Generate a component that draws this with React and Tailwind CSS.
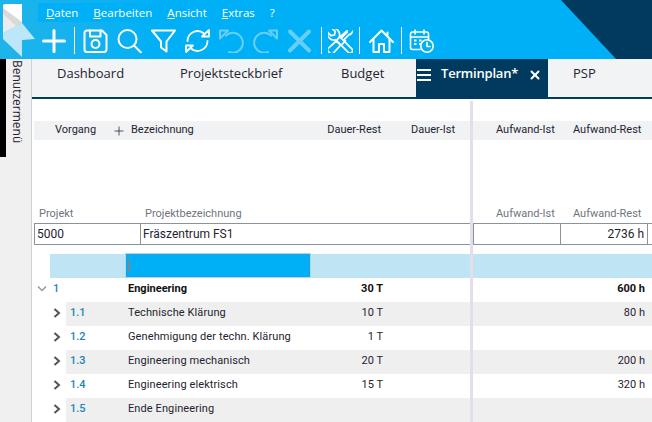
import { Plus, X } from 'lucide-react'

const sans = "font-['Open_Sans',sans-serif]"
const roboto = "font-['Roboto',sans-serif]"

function Ico({ children, className = '', stroke = 2 }) {
  return (
    <svg viewBox="0 0 25 24" width="25" height="24" fill="none" stroke="white" strokeWidth={stroke} strokeLinecap="round" strokeLinejoin="round" className={className}>
      {children}
    </svg>
  )
}

function Sep({ className = '' }) {
  return <div className={`w-px h-[27px] bg-white ${className}`} />
}

function Menu({ first, rest, className }) {
  return (
    <span className={className}>
      <span className="underline">{first}</span>{rest}
    </span>
  )
}

function Logo() {
  return (
    <svg viewBox="0 0 38 59" width="38" height="59" className="shrink-0">
      <polygon points="3,5 5,4 22,4 22,23 3,33" fill="white" />
      <polygon points="3,14 16,26 3,33" fill="#ececec" />
      <polygon points="3,8 22,22 22,23 16,26 3,14" fill="#d9d9d9" />
      <polygon points="3,33 22,23 35,39 22,40 22,57 3,39" fill="#bde6f8" />
    </svg>
  )
}

function Toolbar() {
  return (
    <div className="flex items-center h-[35px] pb-[2px] gap-[9px]">
      <Plus color="white" size={36} strokeWidth={2} className="-ml-[2px] -mr-[7px]" />
      <Sep className="-mr-[1px]" />
      <Ico>
        <path d="M4 1.5H19L23.5 6V20.5a2.5 2.5 0 0 1-2.5 2.5H4a2.5 2.5 0 0 1-2.5-2.5V4A2.5 2.5 0 0 1 4 1.5Z" />
        <path d="M7 1.5V7.5H17.5V1.5" />
        <circle cx="12.5" cy="15" r="4" />
      </Ico>
      <Ico>
        <circle cx="10.5" cy="10" r="9" />
        <path d="M17 16.5L24 23.5" />
      </Ico>
      <Ico>
        <path d="M1 1.5H24L15.5 12.5V22.5L10 18.5V12.5Z" />
      </Ico>
      <Ico stroke={1.8}>
        <path d="M2.5 12A10 10 0 0 1 19 4.5" />
        <path d="M22.5 12A10 10 0 0 1 6 19.5" />
        <path d="M17 7.5L24 1V7.5Z" />
        <path d="M8 16.5L1 23V16.5Z" />
      </Ico>
      <Ico className="opacity-40" stroke={2}>
        <path d="M7 6.5A10 10 0 1 1 10 23" />
        <path d="M1 1.5H9L1 9.5Z" />
      </Ico>
      <Ico className="opacity-40" stroke={2}>
        <path d="M18 6.5A10 10 0 1 0 15 23" />
        <path d="M24 1.5H16L24 9.5Z" />
      </Ico>
      <Ico className="opacity-40" stroke={4}>
        <path d="M3 2.5L22 21.5M22 2.5L3 21.5" />
      </Ico>
      <Sep className="-mr-[3px]" />
      <Ico stroke={1.7} className="-mr-[3px]">
        <g transform="rotate(-45 12.5 12)">
          <path d="M9.5 -3.5V1.5L12.5 3.5L15.5 1.5V-3.5A7 7 0 0 1 15 8V25.5A2.5 2.5 0 0 1 10 25.5V8A7 7 0 0 1 9.5 -3.5Z" />
        </g>
        <g transform="rotate(45 12.5 12)">
          <path d="M11 -6H14L15 0L14 1V8.5H16V13M9 13V8.5H11V1L10 0Z" />
          <path d="M9.5 15H15.5L16 26A2 2 0 0 1 14 28H11A2 2 0 0 1 9 26Z" />
        </g>
      </Ico>
      <Sep />
      <Ico className="-mr-[2px]">
        <path d="M1 13L12.5 1.5L24 13" />
        <path d="M4.5 10V23H10V15H15V23H20.5V10" />
        <path d="M18.5 3.5V6" />
      </Ico>
      <Sep className="-mr-[2px]" />
      <Ico stroke={1.6}>
        <path d="M11 20.5H3.5A2 2 0 0 1 1.5 18.5V5A2 2 0 0 1 3.5 3H17.5A2 2 0 0 1 19.5 5V11" />
        <path d="M1.5 8H19.5M6 1V5M15 1V5" />
        <path d="M5 11.5H7.5M10 11.5H12.5M5 15H7.5M10 15H12.5" strokeWidth={2.2} strokeLinecap="butt" />
        <circle cx="18" cy="17" r="6.2" />
        <path d="M18 13.5V17.5H21" />
      </Ico>
    </div>
  )
}

function Header() {
  return (
    <header className="relative flex h-[59px] bg-gradient-to-r from-[#1eb4ea] to-[#00b0f6] to-[25%] overflow-hidden">
      <Logo />
      <div className="relative flex flex-col flex-1 min-w-0">
        <div className={`${sans} flex items-center h-[19px] mt-[3px] mb-[2px] bg-[#00b0f6] text-[11.5px] text-white`}>
          <Menu first="D" rest="aten" className="ml-[8px]" />
          <Menu first="B" rest="earbeiten" className="ml-[15px]" />
          <Menu first="A" rest="nsicht" className="ml-[15px]" />
          <Menu first="E" rest="xtras" className="ml-[15px]" />
          <span className="ml-[15px]">?</span>
        </div>
        <Toolbar />
      </div>
      <svg viewBox="0 0 91 59" width="91" height="59" className="absolute right-0 top-0">
        <polygon points="0,0 91,0 91,59 55,59" fill="#003a5f" />
      </svg>
    </header>
  )
}

function Tab({ label, className }) {
  return <div className={`${className} flex items-center h-[38px] pl-[25px] pb-[8px] text-[13px] text-[#1f2430]`}>{label}</div>
}

function Tabs() {
  return (
    <div className={`${sans} flex h-[40px] bg-[#f2f3f5] border-b-2 border-[#003a5f]`}>
      <Tab label="Dashboard" className="w-[123px]" />
      <Tab label="Projektsteckbrief" className="w-[161px]" />
      <Tab label="Budget" className="w-[100px]" />
      <div className="flex items-center w-[132px] h-[38px] bg-[#003a5f] pb-[8px] text-white">
        <div className="ml-[1px] mt-[2px] w-[14px] flex flex-col gap-[3px]">
          <div className="h-[2px] bg-white" />
          <div className="h-[2px] bg-white" />
          <div className="h-[2px] bg-white" />
        </div>
        <span className="ml-[10px] w-[87px] text-[13px] font-semibold tracking-[-0.2px] whitespace-nowrap">Terminplan*</span>
        <X size={14} strokeWidth={3.5} color="white" className="mt-[2px]" />
      </div>
      <Tab label="PSP" className="flex-1" />
    </div>
  )
}

// one horizontal band of the table: left pane, splitter, right pane
function Band({ left, right, className = '', leftClass = '', rightClass = '' }) {
  return (
    <div className={`flex w-[620px] ${className}`}>
      <div className={`w-[438px] shrink-0 flex items-center relative ${leftClass}`}>{left}</div>
      <div className="w-[3px] shrink-0 self-stretch bg-[#e4deea]" />
      <div className={`flex-1 flex items-center min-w-0 ${rightClass}`}>{right}</div>
    </div>
  )
}

function AufwandHead() {
  return (
    <>
      <span className="ml-[23px] w-[77px] whitespace-nowrap">Aufwand-Ist</span>
      <span className="whitespace-nowrap">Aufwand-Rest</span>
    </>
  )
}

function TaskRow({ no, name, dauer, aufwand, shade }) {
  return (
    <Band
      className="h-[24px] text-[#1f2430]"
      left={
        <>
          <svg viewBox="0 0 8 10" width="8" height="10" fill="none" stroke="#555" strokeWidth="2" className="ml-[21px] mb-[2px] shrink-0">
            <path d="M1.5 1L6 5L1.5 9" />
          </svg>
          <div className={`flex items-center ml-[5px] flex-1 self-stretch ${shade ? 'bg-[#efefef]' : ''}`}>
            <span className="ml-[4px] mb-[2px] w-[58px] font-medium text-[#1c84b8]">{no}</span>
            <span className="w-[190px] mb-[2px] whitespace-nowrap tracking-[0.1px]">{name}</span>
            <span className="w-[65px] mb-[2px] text-right">{dauer}</span>
          </div>
        </>
      }
      right={<span className="w-[172px] mb-[2px] text-right">{aufwand}</span>}
      rightClass={shade ? 'bg-[#efefef] self-stretch' : ''}
    />
  )
}

function Table() {
  const tasks = [
    { no: '1.1', name: 'Technische Klärung', dauer: '10 T', aufwand: '80 h', shade: true },
    { no: '1.2', name: 'Genehmigung der techn. Klärung', dauer: '1 T', aufwand: '' },
    { no: '1.3', name: 'Engineering mechanisch', dauer: '20 T', aufwand: '200 h', shade: true },
    { no: '1.4', name: 'Engineering elektrisch', dauer: '15 T', aufwand: '320 h' },
    { no: '1.5', name: 'Ende Engineering', dauer: '', aufwand: '', shade: true },
  ]

  return (
    <div className={`${roboto} flex-1 min-w-0 text-[11px] overflow-hidden`}>
      <Band className="h-[20px] mt-[2px]" />
      <Band
        className="h-[19px] text-[#1f2430]"
        leftClass="bg-[#f1f2f4] ml-[2px] !w-[436px]"
        rightClass="bg-[#f1f2f4] self-stretch"
        left={
          <>
            <span className="ml-[21px] w-[57px]">Vorgang</span>
            <Plus size={14} strokeWidth={1.3} color="#1f2430" />
            <span className="ml-[5px] w-[192px]">Bezeichnung</span>
            <span className="w-[58px] text-right">Dauer-Rest</span>
            <span className="ml-[30px]">Dauer-Ist</span>
          </>
        }
        right={<AufwandHead />}
      />
      <Band className="h-[66px]" />
      <Band
        className="h-[17px] text-[#6f7580]"
        left={
          <>
            <span className="ml-[7px] w-[106px]">Projekt</span>
            <span>Projektbezeichnung</span>
          </>
        }
        right={<AufwandHead />}
      />
      <Band
        className="h-[22px] text-[12px] text-[#1f2430]"
        leftClass="ml-[2px] !w-[436px] border border-r-0 border-[#8a929e] self-stretch"
        rightClass="self-stretch border border-[#8a929e] border-r-0"
        left={
          <>
            <span className="pl-[2px] w-[106px] h-full flex items-center border-r border-[#8a929e]">5000</span>
            <span className="pl-[2px]">Fräszentrum FS1</span>
          </>
        }
        right={
          <>
            <div className="w-[87px] h-full border-r border-[#8a929e]" />
            <div className="w-[87px] h-full pr-[3px] flex items-center justify-end border-r border-[#8a929e]">2736 h</div>
          </>
        }
      />
      <Band className="h-[9px]" />
      <Band
        className="h-[24px]"
        leftClass="ml-[18px] !w-[420px] bg-[#bfe5f4] self-stretch"
        rightClass="bg-[#bfe5f4] self-stretch"
        left={
          <div className="ml-[76px] w-[184px] h-[23px] mb-px bg-[#00b0f6] border border-[#2a9ae0] outline outline-1 outline-[#a5dcf2] flex items-center">
            <div className="ml-[2px] w-px h-[13px] bg-[#e8643a]" />
          </div>
        }
      />
      <Band
        className="h-[24px] font-bold text-[#111]"
        left={
          <>
            <svg viewBox="0 0 10 8" width="10" height="8" fill="none" stroke="#999" strokeWidth="1.5" className="ml-[5px] mb-[2px] shrink-0">
              <path d="M1 1.5L5 5.5L9 1.5" />
            </svg>
            <span className="ml-[6px] mb-[2px] w-[75px] text-[#1c84b8] font-medium">1</span>
            <span className="w-[190px] mb-[2px]">Engineering</span>
            <span className="w-[65px] mb-[2px] text-right">30 T</span>
          </>
        }
        right={<span className="w-[172px] mb-[2px] text-right">600 h</span>}
      />
      {tasks.map((t) => <TaskRow key={t.no} {...t} />)}
    </div>
  )
}

export default function App() {
  return (
    <div className="w-[652px] h-[422px] overflow-hidden bg-white flex flex-col">
      <Header />
      <div className="flex flex-1 min-h-0">
        <aside className={`${sans} w-[32px] shrink-0 bg-[#f0f0f0] border-r border-[#cfd2da] flex`}>
          <div className="w-[6px] h-[98px] bg-black" />
          <span className="ml-[4px] mt-[1px] h-fit text-[12px] leading-[14px] text-[#1f2430] [writing-mode:vertical-rl] whitespace-nowrap">Benutzermenü</span>
        </aside>
        <main className="flex-1 min-w-0 flex flex-col">
          <Tabs />
          <Table />
        </main>
      </div>
    </div>
  )
}
